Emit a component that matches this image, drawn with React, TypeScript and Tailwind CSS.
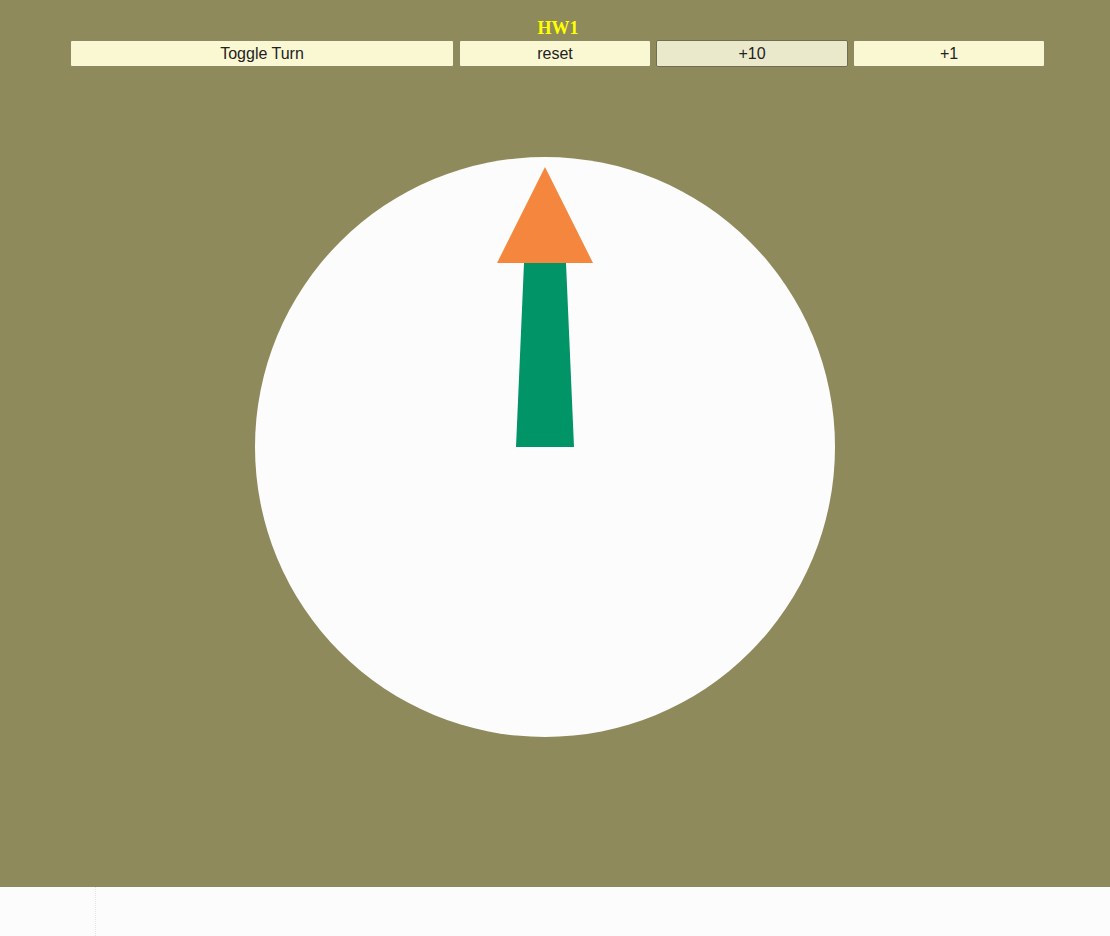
const buttons = [
    { label: "Toggle Turn", grow: "w-[384px]", hover: false },
    { label: "reset", grow: "w-[192px]", hover: false },
    { label: "+10", grow: "w-[192px]", hover: true },
    { label: "+1", grow: "w-[192px]", hover: false },
];

const Arrow = () => (
    <svg width="580" height="580" viewBox="0 0 580 580" className="absolute left-0 top-0">
        {/* needle body */}
        <path d="M269,106 Q269,103 276,103 L304,103 Q311,103 311,106 L319,290 L261,290 Z" fill="#009466" />
        {/* head */}
        <polygon points="290,10 338,106 242,106" fill="#f5863e" />
    </svg>
);

const App = () => {
    return (
        <div className="w-[1110px] h-[936px] flex flex-col font-['Liberation_Sans',Arial,sans-serif]">
            <div className="h-[887px] bg-[#8f8a5b] flex flex-col">
                <h1 className="pt-[17px] text-center text-[18px] leading-[22px] font-bold text-[#ffff00] font-['Liberation_Serif',serif] pl-[6px]">
                    HW1
                </h1>
                <div className="mt-[1px] pl-[70px] flex gap-[5px]">
                    {buttons.map((b) => (
                        <button
                            key={b.label}
                            className={`${b.grow} h-[27px] text-[16px] leading-[24px] text-[#222] rounded-[2px] ${
                                b.hover
                                    ? "bg-[#ebe9cb] border border-[#6f6d55]"
                                    : "bg-[#faf8d2] border border-[#8c8a64]"
                            }`}
                        >
                            {b.label}
                        </button>
                    ))}
                </div>
                <div className="mt-[90px] pl-[255px]">
                    <div className="relative w-[580px] h-[580px] rounded-full bg-[#fcfcfd]">
                        <Arrow />
                    </div>
                </div>
            </div>
            <div className="flex-1 bg-[#fcfcfd] flex">
                <div className="w-[96px] border-r border-dotted border-[#e6e6ee]" />
            </div>
        </div>
    );
};

export default App;
